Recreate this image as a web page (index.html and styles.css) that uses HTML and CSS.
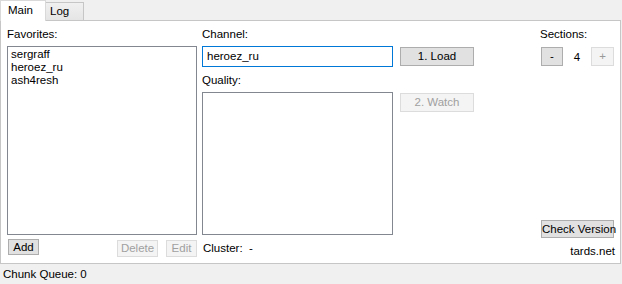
FILE: index.html
```html
<!DOCTYPE html>
<html>
<head>
<meta charset="utf-8">
<link rel="stylesheet" href="styles.css">
</head>
<body>
<div class="window">
  <div class="tabs">
    <div class="tab active">Main</div>
    <div class="tab">Log</div>
  </div>
  <div class="panel">
    <div class="col col-fav">
      <div class="label">Favorites:</div>
      <div class="listbox fav-list">
        <div>sergraff</div>
        <div>heroez_ru</div>
        <div>ash4resh</div>
      </div>
      <div class="fav-actions">
        <button class="btn btn-add">Add</button>
        <span class="spacer"></span>
        <button class="btn disabled btn-delete">Delete</button>
        <button class="btn disabled btn-edit">Edit</button>
      </div>
    </div>
    <div class="col col-channel">
      <div class="label">Channel:</div>
      <div class="textbox">heroez_ru</div>
      <div class="label label-quality">Quality:</div>
      <div class="listbox quality-list"></div>
      <div class="cluster">Cluster:&nbsp; -</div>
    </div>
    <div class="col col-actions">
      <button class="btn btn-load">1. Load</button>
      <button class="btn disabled btn-watch">2. Watch</button>
    </div>
    <div class="col col-sections">
      <div class="label label-sections">Sections:</div>
      <div class="sections-row">
        <button class="btn btn-small">-</button>
        <span class="count">4</span>
        <button class="btn btn-small disabled">+</button>
      </div>
      <span class="spacer-v"></span>
      <button class="btn btn-check">Check Version</button>
      <div class="site">tards.net</div>
    </div>
  </div>
  <div class="status">Chunk Queue: 0</div>
</div>
</body>
</html>
```

FILE: styles.css
```css
* { box-sizing: border-box; }
html, body { margin: 0; padding: 0; }
body {
  background: #f0f0f0;
  font-family: "Liberation Sans", Arial, sans-serif;
  font-size: 11.5px;
  color: #000;
}
.window {
  width: 622px;
  height: 284px;
  display: flex;
  flex-direction: column;
}
.tabs {
  display: flex;
  align-items: flex-end;
  height: 20px;
  position: relative;
  z-index: 1;
}
.tab {
  height: 18px;
  padding: 0 0 0 4px;
  width: 38px;
  border: 1px solid #c6c6c6;
  border-bottom: none;
  border-left: none;
  background: linear-gradient(#f0f0f0, #e5e5e5);
  line-height: 17px;
}
.tab.active {
  width: 46px;
  height: 21px;
  background: #fff;
  border: 1px solid #d9d9d9;
  border-bottom: none;
  padding-left: 7px;
  line-height: 19px;
  margin-bottom: -1px;
}
.panel {
  width: 621px;
  height: 244px;
  background: #fff;
  border: 1px solid #c6c6c6;
  display: flex;
  padding: 7px 0 0 6px;
}
.col { display: flex; flex-direction: column; }
.label { height: 18px; line-height: 13px; }
.col-fav { width: 190px; }
.listbox {
  border: 1px solid #828790;
  background: #fff;
}
.fav-list {
  height: 189px;
  padding: 1px 3px;
  line-height: 13px;
}
.fav-actions {
  display: flex;
  margin-top: 4px;
  padding-left: 1px;
}
.spacer { flex: 1; }
.btn {
  font: inherit;
  font-size: 11.5px;
  background: #e1e1e1;
  border: 1px solid #adadad;
  padding: 0;
  margin: 0;
  color: #000;
  line-height: 15px;
  height: 17px;
  white-space: nowrap;
}
.btn.disabled {
  background: #f4f4f4;
  border-color: #dcdcdc;
  color: #a0a0a0;
}
.btn-add { width: 31px; height: 16px; line-height: 14px; }
.btn-delete { width: 41px; margin-top: 1px; }
.btn-edit { width: 31px; margin-left: 8px; margin-top: 1px; }
.col-channel { width: 191px; margin-left: 5px; }
.textbox {
  height: 21px;
  border: 1px solid #0078d7;
  padding: 0 4px;
  line-height: 19px;
}
.label-quality { margin-top: 7px; }
.quality-list { height: 143px; }
.cluster { margin-top: 7px; padding-left: 1px; }
.col-actions { width: 74px; margin-left: 7px; padding-top: 19px; }
.btn-load { height: 19px; line-height: 17px; }
.btn-watch { height: 19px; line-height: 17px; margin-top: 27px; }
.col-sections { width: 73px; margin-left: 67px; height: 232px; }
.label-sections { margin-left: -1px; }
.sections-row { display: flex; align-items: center; margin-top: 1px; }
.btn-small { width: 22px; height: 19px; line-height: 17px; }
.btn-small.disabled { width: 23px; color: #999; }
.count { width: 28px; text-align: center; }
.spacer-v { flex: 1; }
.btn-check { width: 73px; height: 18px; line-height: 16px; }
.site { text-align: right; margin-top: 7px; height: 15px; margin-right: -1px; }
.status {
  padding: 4px 0 0 3px;
  height: 20px;
}
```
